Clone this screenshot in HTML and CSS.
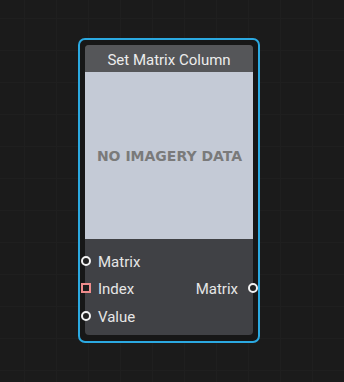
FILE: index.html
```html
<!DOCTYPE html>
<html lang="en">
<head>
    <meta charset="UTF-8">
    <meta name="viewport" content="width=device-width, initial-scale=1.0">
    <title>Set Matrix Column</title>
    <link rel="stylesheet" href="styles.css">
</head>
<body>
    <div class="canvas">
        <div class="node-select">
            <div class="node">
                <div class="node-title">Set Matrix Column</div>
                <div class="node-preview">NO IMAGERY DATA</div>
                <div class="node-ports">
                    <div class="port-row">
                        <span class="port-label"><i class="port port-in"></i>Matrix</span>
                    </div>
                    <div class="port-row">
                        <span class="port-label"><i class="port port-in port-int"></i>Index</span>
                        <span class="port-label out">Matrix<i class="port port-out"></i></span>
                    </div>
                    <div class="port-row">
                        <span class="port-label"><i class="port port-in"></i>Value</span>
                    </div>
                </div>
            </div>
        </div>
    </div>
</body>
</html>
```

FILE: styles.css
```css
body {
    margin: 0;
    font-family: Roboto, "Liberation Sans", sans-serif;
    background: #1b1b1b;
}
.canvas {
    position: relative;
    width: 344px;
    height: 382px;
    overflow: hidden;
    background-color: #1b1b1b;
    background-image:
        linear-gradient(to right, #1f1f1f 1px, transparent 1px),
        linear-gradient(to bottom, #1f1f1f 1px, transparent 1px);
    background-size: 32px 32px;
    background-position: 24px 18px;
}
/* selected node frame */
.node-select {
    position: absolute;
    left: 78px;
    top: 38px;
    width: 168px;
    padding: 5px 5px 6px;
    border: 2px solid #2ba9e1;
    border-radius: 7px;
    background: #171717;
}
.node {
    position: relative;
    display: flex;
    flex-direction: column;
    height: 290px;
    border-radius: 4px;
    background: #404145;
}
.node-title {
    height: 27px;
    line-height: 30px;
    text-align: center;
    color: #ececec;
    font-size: 15px;
    background: #555659;
    border-radius: 4px 4px 0 0;
}
.node-preview {
    height: 167px;
    display: flex;
    align-items: center;
    justify-content: center;
    background: #c4cad6;
    color: #7a7a7a;
    font-family: "DejaVu Sans", sans-serif;
    font-weight: bold;
    font-size: 14px;
    padding-left: 1px;
}
.node-ports {
    flex: 1;
    padding-top: 9px;
}
.port-row {
    height: 27.5px;
    display: flex;
    align-items: center;
    justify-content: space-between;
    padding: 0 15px 0 13px;
    color: #e6e6e6;
    font-size: 15px;
}
.port-label {
    line-height: 28px;
}
.port {
    position: absolute;
    box-sizing: border-box;
    width: 10px;
    height: 10px;
    border: 2px solid #f2f2f2;
    border-radius: 50%;
    background: #222;
    margin-top: 8px;
}
.port-in {
    left: -4px;
}
.port-out {
    right: -5px;
}
.port-int {
    border-radius: 0;
    border-color: #ef8c8c;
    background: #1e1e1e;
}
```
